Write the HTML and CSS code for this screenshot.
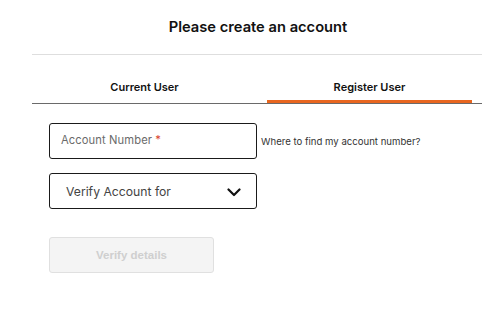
FILE: index.html
```html
<!DOCTYPE html>
<html>
<head>
<meta charset="utf-8">
<link rel="stylesheet" href="styles.css">
</head>
<body>
<div class="page">
  <h1 class="title">Please create an account</h1>
  <div class="divider"></div>
  <div class="tabs">
    <div class="tab">Current User</div>
    <div class="tab active">Register User</div>
  </div>
  <div class="form">
    <div class="row">
      <div class="field"><span class="placeholder">Account Number <span class="req">*</span></span></div>
      <span class="help">Where to find my account number?</span>
    </div>
    <div class="row">
      <div class="field select">
        <span class="select-text">Verify Account for</span>
        <svg class="chev" width="14" height="9" viewBox="0 0 14 9"><path d="M1.5 1.5 L7 7 L12.5 1.5" fill="none" stroke="#111" stroke-width="2.2" stroke-linecap="round" stroke-linejoin="round"/></svg>
      </div>
    </div>
    <button class="btn">Verify details</button>
  </div>
</div>
</body>
</html>
```
FILE: styles.css
```css
* { box-sizing: border-box; }
html, body { margin: 0; padding: 0; background: #fff; }
body { font-family: Inter, "Noto Sans", sans-serif; color: #111; }
.page { width: 450px; margin-left: 32px; }
.title {
  margin: 0;
  height: 54px;
  padding-top: 17px;
  font-size: 14.7px;
  font-weight: 600;
  text-align: center;
  line-height: 20px;
  padding-left: 2px;
}
.divider { height: 1px; background: #dedede; }
.tabs {
  display: flex;
  margin-top: 24px;
  border-bottom: 1.5px solid #6a6a6a;
}
.tab {
  flex: 1;
  text-align: center;
  font-size: 11px;
  font-weight: 600;
  line-height: 16px;
  padding-bottom: 5px;
  margin: 0 10px;
  border-bottom: 3px solid transparent;
}
.tab.active { border-bottom-color: #e8661f; }
.form { padding-left: 17px; padding-top: 19px; }
.row { display: flex; align-items: center; margin-bottom: 14px; }
.field {
  width: 208px;
  height: 36px;
  border: 1.5px solid #1a1a1a;
  border-radius: 3px;
  display: flex;
  align-items: center;
  padding-left: 11px;
  padding-bottom: 2px;
}
.placeholder { font-size: 11.2px; color: #6a6a6a; letter-spacing: 0.1px; }
.req { color: #d9402b; }
.help { font-size: 9.6px; color: #333; margin-left: 4px; margin-top: 1px; }
.select { justify-content: space-between; padding-right: 15px; padding-left: 16px; padding-bottom: 0; }
.select-text { font-size: 12.2px; color: #444; }
.chev { margin-top: 3px; }
.btn {
  margin-top: 14px;
  width: 165px;
  height: 36px;
  background: #f4f4f4;
  border: 1.5px solid #e0e0e0;
  border-radius: 3px;
  font-family: "Liberation Sans", Arial, sans-serif;
  font-weight: bold;
  font-size: 11.5px;
  color: #cfcfcf;
  padding: 0;
}
```
